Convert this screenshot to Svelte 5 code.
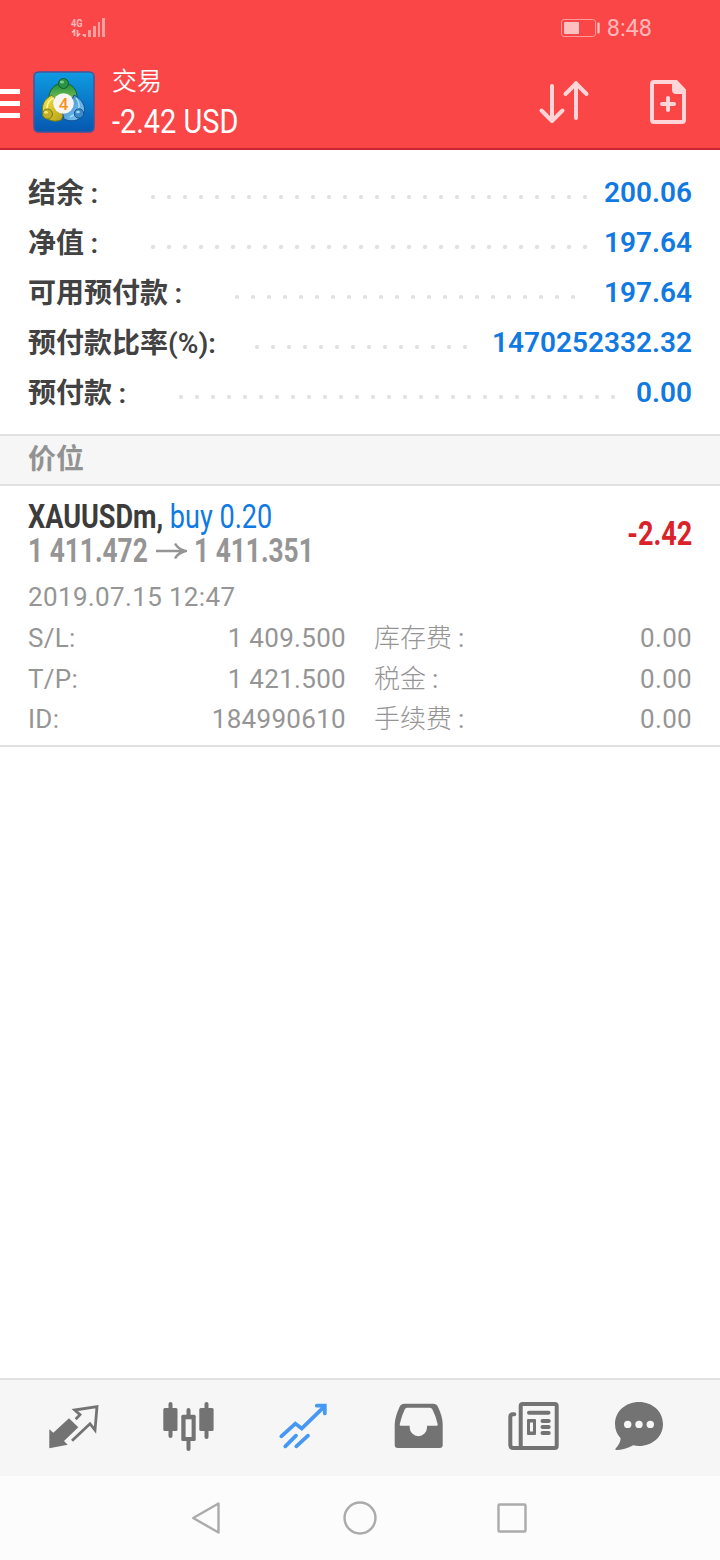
<script>
  // Account summary: `dots` is how many leader dots fit between label and value.
  const summary = [
    { label: "结余", value: "200.06", dots: 28 },
    { label: "净值", value: "197.64", dots: 28 },
    { label: "可用预付款", value: "197.64", dots: 22 },
    { label: "预付款比率(%)", value: "1470252332.32", dots: 14, narrow: true },
    { label: "预付款", value: "0.00", dots: 28 },
  ];

  const details = [
    { key: "S/L:", value: "1 409.500", fee: "库存费", amount: "0.00" },
    { key: "T/P:", value: "1 421.500", fee: "税金", amount: "0.00" },
    { key: "ID:", value: "184990610", fee: "手续费", amount: "0.00" },
  ];

  const signal = [3, 7, 11, 15, 19];
</script>

<div class="screen">
  <header>
    <div class="status">
      <div class="network">
        <div class="network-type">
          <span>4G</span>
          <svg width="14" height="8" viewBox="0 0 14 8">
            <path d="M1 3.5L3.5 1V7M6.5 1V7L9 4.5M12.5 5V7" />
          </svg>
        </div>
        <div class="bars">
          {#each signal as h}
            <i style:height="{h}px"></i>
          {/each}
        </div>
      </div>
      <div class="power">
        <svg width="40" height="20" viewBox="0 0 40 20">
          <rect x="1.5" y="1.5" width="34" height="17" rx="2.5" fill="none" stroke="#fd9a9b" />
          <rect x="4" y="4" width="15" height="12" rx="1" fill="#ffc0c1" />
          <rect x="37.3" y="4.5" width="2.4" height="11" rx="1" fill="#ffc0c1" />
        </svg>
        <span>8:48</span>
      </div>
    </div>

    <div class="appbar">
      <div class="menu"><i></i><i></i><i></i></div>
      <svg class="logo" width="62" height="62" viewBox="0 0 62 62">
        <defs>
          <linearGradient id="sky" x1="0" y1="0" x2="0" y2="1">
            <stop offset="0" stop-color="#0f9be2" />
            <stop offset="1" stop-color="#0557b0" />
          </linearGradient>
          <linearGradient id="green" x1="0" y1="0" x2="0" y2="1">
            <stop offset="0" stop-color="#1d8d3d" />
            <stop offset="1" stop-color="#8ccf5a" />
          </linearGradient>
          <linearGradient id="gold" x1="0" y1="0" x2="1" y2="1">
            <stop offset="0" stop-color="#f5e84c" />
            <stop offset="1" stop-color="#b39a12" />
          </linearGradient>
          <linearGradient id="blue" x1="0" y1="0" x2="1" y2="1">
            <stop offset="0" stop-color="#2c83cc" />
            <stop offset="1" stop-color="#8bd0f5" />
          </linearGradient>
        </defs>
        <rect x="1" y="1" width="60" height="60" rx="4.5" fill="url(#sky)" stroke="#40579c" stroke-width="1.5" />
        <path d="M16 29C15 19 22 12 30.5 12S45 19 44 29L38 33H24Z" fill="url(#green)" stroke="#14622f" />
        <path d="M19 24C11 28 8 35 10 42S21 52 28 49L33 40L24 31Z" fill="url(#gold)" stroke="#6d7c1c" />
        <path d="M41 24C49 28 53 35 51 42S39 52 31 48L29 40L38 31Z" fill="url(#blue)" stroke="#174f93" />
        <path d="M43 27C49 34 46 42 37 46" fill="none" stroke="#a9dcf5" stroke-width="1.5" />
        <path d="M14 38C14 32 17 28 21 27" fill="none" stroke="#fff6a0" stroke-width="1.5" />
        <circle cx="30.5" cy="12.5" r="5" fill="#299447" stroke="#125a2c" />
        <circle cx="14.5" cy="43" r="5" fill="#c4ae22" stroke="#6d7c1c" />
        <circle cx="46" cy="42.5" r="4.7" fill="#3b8bc9" stroke="#174f93" />
        <ellipse cx="29" cy="11" rx="2" ry="1.5" fill="#82cc8c" />
        <ellipse cx="13" cy="41.3" rx="2" ry="1.4" fill="#f4e77a" />
        <ellipse cx="45" cy="41" rx="1.8" ry="1.3" fill="#a4d8f4" />
        <circle cx="30.5" cy="32.5" r="10.3" fill="#f7f5f1" />
        <text x="30.5" y="38.5" class="four">4</text>
      </svg>
      <div class="title">
        <div class="title-name">交易</div>
        <div class="title-sum"><span>-2.42 USD</span></div>
      </div>
      <svg class="act" width="60" height="60" viewBox="0 0 60 60">
        <path d="M18 14V49M7.5 38.5L18 49L28.5 38.5M42 46V11M31.5 22L42 11.5L52.5 22" />
      </svg>
      <svg class="act doc" width="60" height="60" viewBox="0 0 60 60">
        <path d="M37.5 10H18Q16 10 16 12V48Q16 50 18 50H46Q48 50 48 48V21" />
        <path class="fold" d="M36 8H41L50 17.5V22H40Q36 22 36 18Z" />
        <path d="M26 32H38M32 26V38" />
      </svg>
    </div>
  </header>

  <section class="summary">
    {#each summary as row}
      <div class="row">
        <div class="label">{row.label}{#if row.narrow}:{:else}<span class="colon">:</span>{/if}</div>
        <div class="dots" style:width="{row.dots * 16}px"></div>
        <div class="value">{row.value}</div>
      </div>
    {/each}
  </section>

  <h2>价位</h2>

  <section class="position">
    <div class="deal">
      <div>
        <div class="line symbol"><span><b>XAUUSDm,</b> buy 0.20</span></div>
        <div class="line prices">
          <span>1 411.472</span>
          <svg width="32" height="20" viewBox="0 0 32 20">
            <path d="M1 10H30M20 2.5Q23 8 30.5 10Q23 12 20 17.5" />
          </svg>
          <span>1 411.351</span>
        </div>
      </div>
      <div class="line profit"><span>-2.42</span></div>
    </div>
    <div class="time">2019.07.15 12:47</div>
    {#each details as d}
      <div class="detail">
        <span class="key">{d.key}</span>
        <span class="num">{d.value}</span>
        <span class="fee">{d.fee}<span class="colon">:</span></span>
        <span class="num">{d.amount}</span>
      </div>
    {/each}
  </section>

  <nav class="tabs">
    <svg viewBox="0 0 115 96">
      <path class="fill" d="M33.3 49.3L37.3 52.7L53 38.3L62.3 47.3L48 61L51.7 64.7L33.3 68.3Z" />
      <path class="thin" d="M56 60.7L74 43.7L79 50L81 26.7L58.7 30L64 34.7L59.7 39.3" />
    </svg>
    <svg viewBox="0 0 115 96">
      <path class="wick" d="M39.5 24V56M75.5 24V57M57.5 30V69" />
      <rect class="fill" x="32.3" y="28" width="14.2" height="23" rx="1.5" />
      <rect class="fill" x="68.3" y="28" width="14.3" height="23" rx="1.5" />
      <rect class="fill" x="50.3" y="34.7" width="14.4" height="26.3" rx="1.5" />
      <rect x="54.6" y="39.3" width="6" height="17.7" fill="#f6f6f6" />
    </svg>
    <svg viewBox="0 0 115 96" class="active">
      <path d="M35.3 56.3L49.3 43.6L55.7 48.5L78 26.8M70.8 25.7H78.8V33.4M39.3 66.3L50 55.7M50.3 66.3L62 55.7" />
    </svg>
    <svg viewBox="0 0 115 96">
      <path class="fill" fill-rule="evenodd" d="M43.5 23.7H72Q75.5 23.7 77 27Q81.7 37 81.7 44V65Q81.7 68 78.7 68H36.7Q33.7 68 33.7 65V44Q34 37 38.5 27Q40 23.7 43.5 23.7ZM46 27.7Q44.5 27.7 43.8 29.2Q40.5 36 38.7 44.2Q38.5 45.8 40 45.8H48.7V47.5A8.6 8.6 0 0 0 66 47.5V45.8H75.4Q77 45.8 76.7 44.2Q75 36 71.3 29.2Q70.6 27.7 69 27.7Z" />
    </svg>
    <svg viewBox="0 0 115 96">
      <rect class="thick" x="44.7" y="24" width="36" height="44" rx="2" />
      <path class="thick" d="M38.3 34.2H37Q34.3 34.2 34.3 37V65Q34.3 68 37.5 68H46M53 32.7H72.5M66.5 41H72.7M66.5 47H72.7M66.5 53H72.7" />
      <path class="fill" fill-rule="evenodd" d="M52 39H59Q60 39 60 40V54Q60 55 59 55H52Q51 55 51 54V40Q51 39 52 39ZM54 42.5V51.5H57V42.5Z" />
    </svg>
    <svg viewBox="0 0 115 96">
      <path class="fill" d="M48 22C61.5 22 72 31.5 72 44S61.5 66 48 66Q45 66 42.3 65.2Q34 69.7 25 70Q23.7 69.7 24.6 68.6Q29.5 63.5 29.6 58.3Q24 52 24 44C24 31.5 34.5 22 48 22Z" />
      <g fill="#f6f6f6">
        <circle cx="36.7" cy="44.4" r="3.7" />
        <circle cx="48" cy="44.4" r="3.7" />
        <circle cx="59.3" cy="44.4" r="3.7" />
      </g>
    </svg>
  </nav>

  <nav class="system">
    <svg viewBox="0 0 36 36"><path d="M3.2 18L28.5 3.5V32.5Z" /></svg>
    <svg viewBox="0 0 36 36"><circle cx="18" cy="18" r="15.5" /></svg>
    <svg viewBox="0 0 36 36"><rect x="4.5" y="4.5" width="27" height="27" rx="1" /></svg>
  </nav>
</div>

<style>
  :global(body) {
    background: #fff;
  }
  .screen {
    width: 720px;
    height: 1560px;
    display: flex;
    flex-direction: column;
    background: #fff;
    font-family: Roboto, "Noto Sans CJK SC", sans-serif;
    overflow: hidden;
  }
  svg {
    display: block;
    flex: none;
  }

  header {
    height: 148px;
    background: #fb4648;
    border-bottom: 2px solid #cb2434;
  }
  .status {
    height: 56px;
    box-sizing: border-box;
    padding: 0 68px 0 71px;
    display: flex;
    align-items: center;
    justify-content: space-between;
    color: #ffb9ba;
  }
  .network {
    display: flex;
    align-items: flex-end;
    height: 20px;
    margin-top: -2px;
  }
  .network-type {
    width: 12.5px;
    font: 700 10.5px/11px Roboto, sans-serif;
  }
  .network-type span {
    display: block;
    transform: scaleX(0.88);
    transform-origin: left;
  }
  .network-type path {
    fill: none;
    stroke: #ffb9ba;
    stroke-width: 1.7;
  }
  .bars {
    display: flex;
    align-items: flex-end;
    gap: 2px;
  }
  .bars i {
    width: 2.7px;
    background: #ff9fa0;
  }
  .power {
    display: flex;
    align-items: center;
    gap: 7px;
    font-size: 23.5px;
    line-height: 28px;
  }

  .appbar {
    height: 92px;
    display: flex;
    align-items: center;
  }
  .menu {
    width: 20px;
    display: flex;
    flex-direction: column;
    gap: 7.5px;
    margin-top: 3px;
  }
  .menu i {
    height: 4.7px;
    background: #fff;
  }
  .logo {
    margin-left: 13px;
  }
  .four {
    font: 500 17px Roboto, sans-serif;
    text-anchor: middle;
    fill: #f7941e;
  }
  .title {
    flex: 1;
    margin-left: 17px;
    padding-top: 3px;
    color: #fff;
  }
  .title-name {
    font-size: 25px;
    line-height: 36px;
    font-weight: 350;
  }
  .title-sum {
    font-size: 34px;
    line-height: 43px;
    white-space: nowrap;
  }
  /* condensed headline face */
  .title-sum span,
  .line span {
    display: inline-block;
    transform: scaleX(0.82);
    transform-origin: left;
  }
  .title-sum span {
    transform: scaleX(0.85);
  }
  .act {
    margin-right: 42px;
  }
  .act.doc {
    margin-right: 24px;
  }
  .act path {
    fill: none;
    stroke: #ffd6d8;
    stroke-width: 4;
    stroke-linecap: round;
    stroke-linejoin: round;
  }
  .act .fold {
    fill: #ffd6d8;
    stroke: none;
  }

  .summary {
    height: 284px;
    box-sizing: border-box;
    padding: 18px 28px 0;
  }
  .row {
    height: 50px;
    display: flex;
    align-items: center;
    font-size: 28px;
    line-height: 50px;
  }
  .label {
    padding-top: 1px;
    color: #424242;
    font-weight: 600;
    white-space: nowrap;
  }
  .colon {
    display: inline-block;
    width: 1em;
    box-sizing: border-box;
    padding-left: 0.23em;
  }
  .dots {
    height: 4px;
    margin: 8px 0 0 33px;
    background: radial-gradient(circle, #e2e2e2 1.8px, transparent 2.4px) 0 0 / 16px 4px repeat-x;
  }
  .value {
    margin-left: auto;
    color: #1079e2;
    font-weight: 600;
  }

  h2 {
    height: 48px;
    margin: 0;
    padding-left: 28px;
    border: solid #e0e0e0;
    border-width: 2px 0;
    background: #f6f6f6;
    color: #929292;
    font-size: 28px;
    line-height: 48px;
    font-weight: 600;
  }

  .position {
    height: 261px;
    box-sizing: border-box;
    padding: 14px 28px 0;
    border-bottom: 2px solid #e0e0e0;
    color: #959595;
    font-size: 26px;
    font-weight: 400;
  }
  .deal {
    height: 68px;
    display: flex;
    align-items: center;
    justify-content: space-between;
  }
  .line {
    height: 34px;
    font-size: 33px;
    line-height: 34px;
    font-weight: 700;
    white-space: nowrap;
  }
  .symbol {
    color: #1079e2;
    font-weight: 400;
  }
  .symbol b {
    color: #3c3c3c;
    font-weight: 700;
  }
  .prices {
    display: flex;
    align-items: center;
  }
  .prices span {
    width: 120px;
    transform: scaleX(0.797);
  }
  .prices svg {
    margin: 0 7px;
  }
  .prices path {
    fill: none;
    stroke: #959595;
    stroke-width: 2.5;
  }
  .profit {
    color: #d9222a;
  }
  .profit span {
    transform-origin: right;
  }
  .time {
    height: 49px;
    line-height: 58px;
    letter-spacing: 0.35px;
  }
  .detail {
    height: 40.5px;
    line-height: 43px;
    display: grid;
    grid-template-columns: 100px 218px 150px 1fr;
  }
  .key {
    letter-spacing: 0.3px;
  }
  .num {
    text-align: right;
    letter-spacing: 0.3px;
  }
  .fee {
    padding-left: 28px;
    font-weight: 300;
  }
  .fee .colon {
    font-weight: 400;
  }

  .tabs {
    height: 96px;
    margin-top: auto;
    padding-left: 16px;
    display: flex;
    border-top: 2px solid #e0e0e0;
    background: #f6f6f6;
  }
  .tabs svg {
    width: 115px;
    height: 96px;
    stroke-linecap: round;
    fill: none;
  }
  .tabs .fill {
    fill: #737373;
  }
  .thin,
  .wick,
  .thick {
    stroke: #737373;
    stroke-width: 2.8;
  }
  .thin {
    stroke-linecap: butt;
  }
  .wick,
  .thick {
    stroke-width: 4;
  }
  .active path {
    stroke: #4798f5;
    stroke-width: 3.8;
  }

  .system {
    height: 84px;
    padding: 0 132px;
    display: flex;
    align-items: center;
    justify-content: space-around;
    background: #fcfcfc;
  }
  .system svg {
    width: 36px;
    height: 36px;
    fill: none;
    stroke: #ababab;
    stroke-width: 2.4;
    stroke-linejoin: round;
  }
</style>
